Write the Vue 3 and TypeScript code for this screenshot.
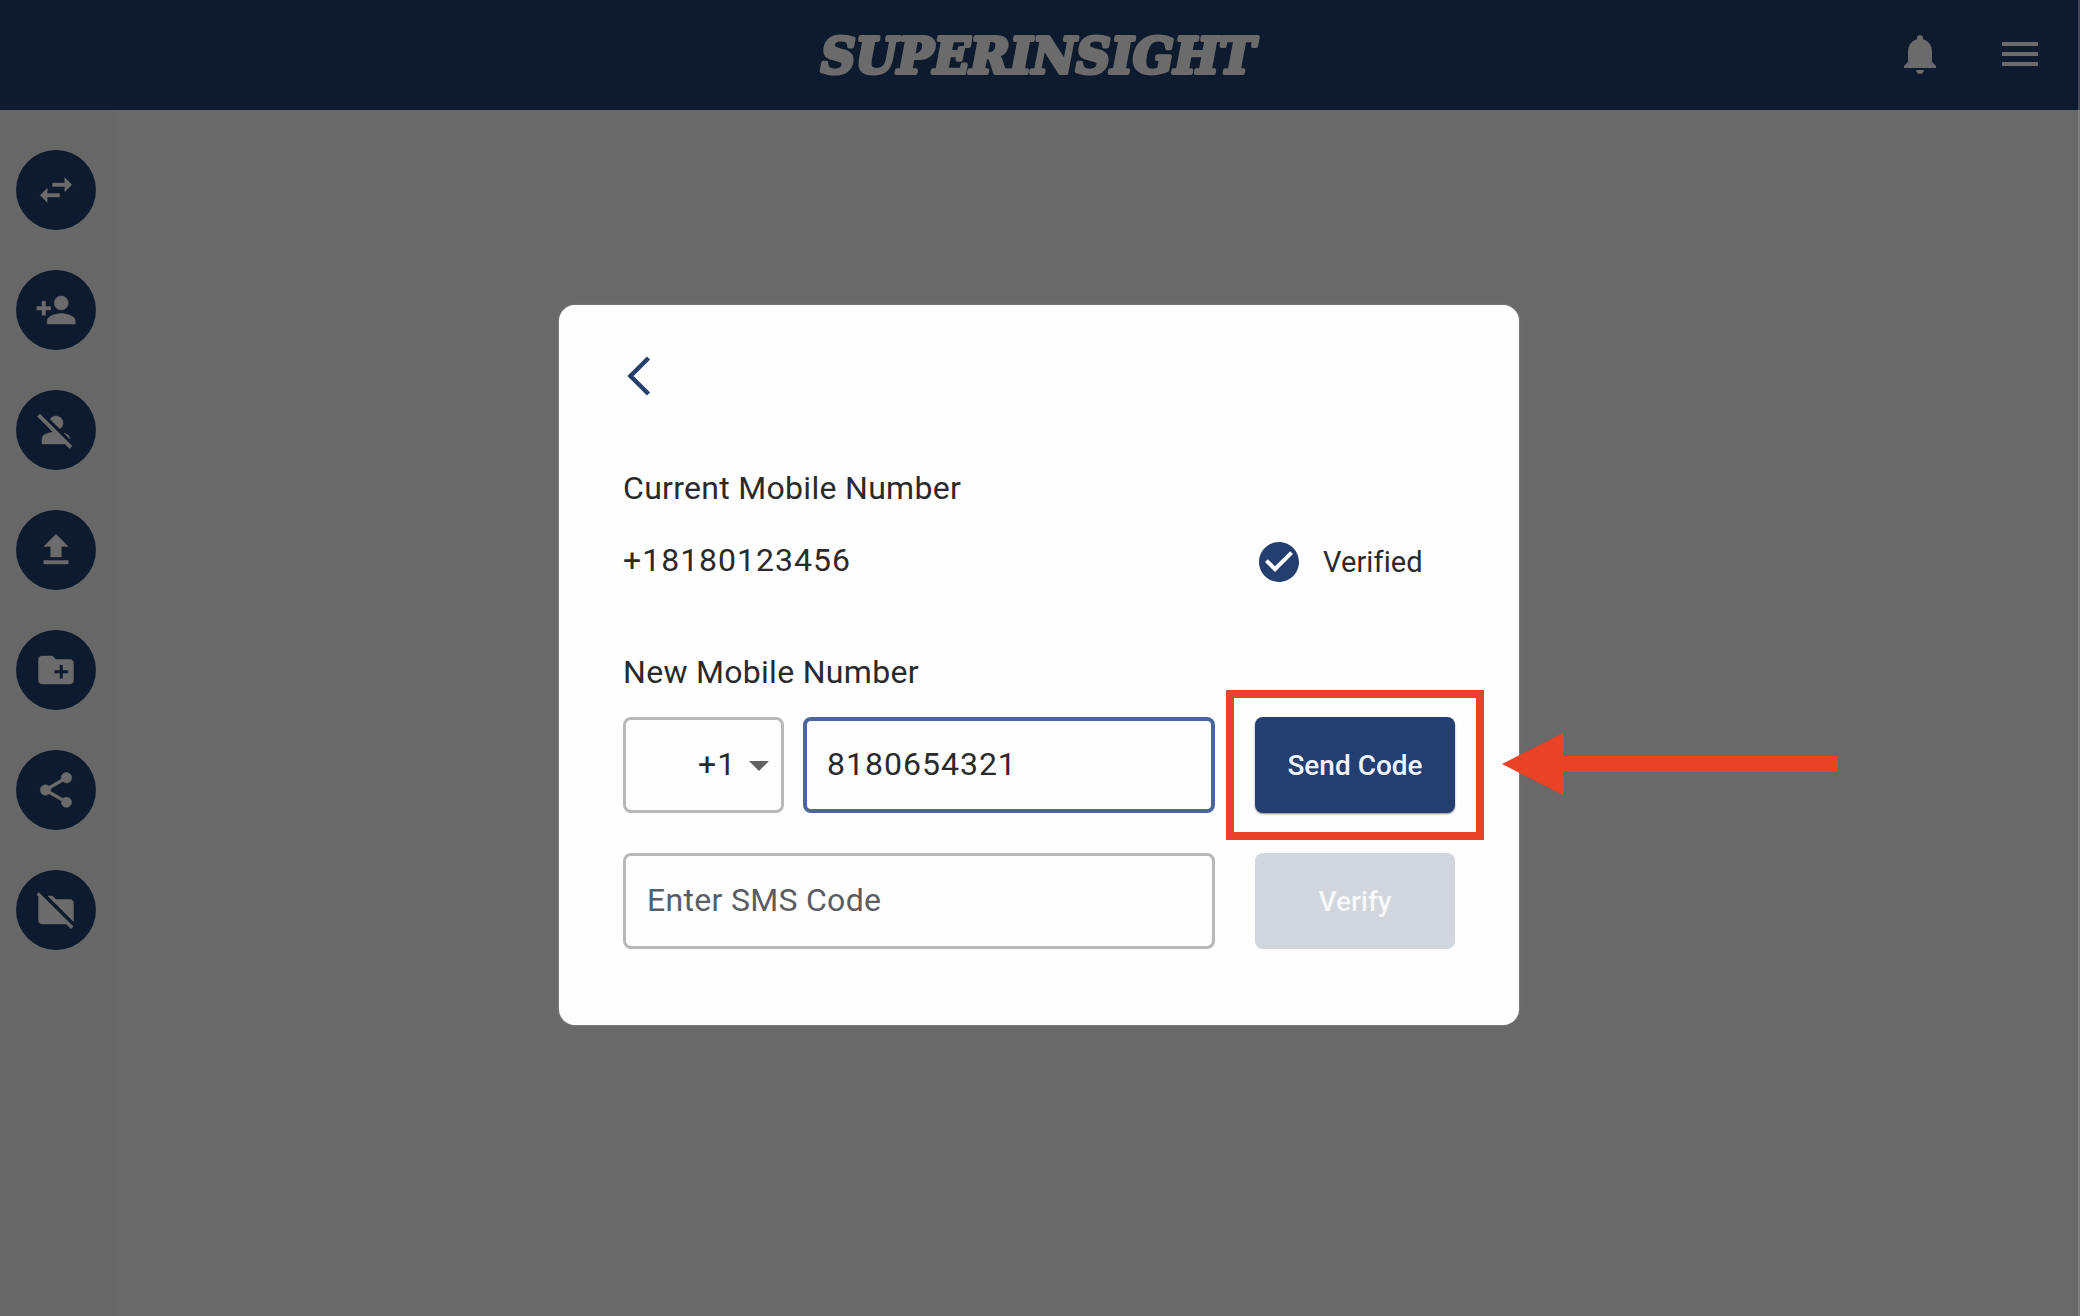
<script setup lang="ts">
interface Action {
  name: string
  path: string
}

const actions: Action[] = [
  { name: 'Switch', path: 'M6.99 11L3 15l3.99 4v-3H14v-2H6.99v-3zM21 9l-3.99-4v3H10v2h7.01v3L21 9z' },
  { name: 'Add person', path: 'M15 12c2.21 0 4-1.79 4-4s-1.79-4-4-4-4 1.79-4 4 1.79 4 4 4zm-9-2V7H4v3H1v2h3v3h2v-3h3v-2H6zm9 4c-2.67 0-8 1.34-8 4v2h16v-2c0-2.66-5.33-4-8-4z' },
  { name: 'Remove person', path: 'M8.65 5.82C9.36 4.72 10.6 4 12 4c2.21 0 4 1.79 4 4 0 1.4-.72 2.64-1.82 3.35L8.65 5.82zM20 17.17c-.02-1.1-.63-2.11-1.61-2.62-.54-.28-1.13-.54-1.77-.76L20 17.17zm1.19 4.02L2.81 2.81 1.39 4.22l8.89 8.89c-1.81.23-3.39.79-4.67 1.45-1 .51-1.61 1.54-1.61 2.66V20h13.17l2.61 2.61 1.41-1.42z' },
  { name: 'Upload', path: 'M5 20h14v-2H5v2zM5 10h4v6h6v-6h4l-7-7-7 7z' },
  { name: 'New folder', path: 'M20 6h-8l-2-2H4c-1.11 0-1.99.89-1.99 2L2 18c0 1.11.89 2 2 2h16c1.11 0 2-.89 2-2V8c0-1.11-.89-2-2-2zm-1 8h-3v3h-2v-3h-3v-2h3V9h2v3h3v2z' },
  { name: 'Share', path: 'M18 16.08c-.76 0-1.44.3-1.96.77L8.91 12.7c.05-.23.09-.46.09-.7s-.04-.47-.09-.7l7.05-4.11c.54.5 1.25.81 2.04.81 1.66 0 3-1.34 3-3s-1.34-3-3-3-3 1.34-3 3c0 .24.04.47.09.7L8.04 9.81C7.5 9.31 6.79 9 6 9c-1.66 0-3 1.34-3 3s1.34 3 3 3c.79 0 1.5-.31 2.04-.81l7.12 4.16c-.05.21-.08.43-.08.65 0 1.61 1.31 2.92 2.92 2.92s2.92-1.31 2.92-2.92-1.31-2.92-2.92-2.92z' },
  { name: 'Remove folder', path: 'M22 8c0-1.1-.9-2-2-2h-8l-2-2H7.4L22 18.6V8zM2.2 2L1 3.2l1.3 1.3C2.1 4.9 2 5.4 2 6v12c0 1.1.9 2 2 2h13.8l2.7 2.7 1.3-1.3L2.2 2z' },
]
</script>

<template>
  <div class="page">
    <header class="topbar">
      <svg class="logo" viewBox="0 0 464 80" role="img">
        <text x="14" y="57.5" textLength="434" lengthAdjust="spacingAndGlyphs">SUPERINSIGHT</text>
      </svg>
      <div class="tools">
        <svg viewBox="0 0 24 24"><path d="M12 22c1.1 0 2-.9 2-2h-4c0 1.1.89 2 2 2zm6-6v-5c0-3.07-1.64-5.64-4.5-6.32V4c0-.83-.67-1.5-1.5-1.5s-1.5.67-1.5 1.5v.68C7.63 5.36 6 7.92 6 11v5l-2 2v1h16v-1l-2-2z" /></svg>
        <svg viewBox="0 0 24 24"><path d="M3 18h18v-2H3v2zm0-5h18v-2H3v2zm0-7v2h18V6H3z" /></svg>
      </div>
    </header>

    <main class="workspace">
      <nav class="sidebar">
        <button v-for="action in actions" :key="action.name" class="action">
          <svg viewBox="0 0 24 24"><path :d="action.path" /></svg>
        </button>
      </nav>
      <section class="content">
        <div class="dialog">
          <svg class="back" viewBox="0 0 24 40"><path d="M21.5 2 3.5 20l18 18" /></svg>
          <h2 class="label">Current Mobile Number</h2>
          <div class="current">
            <span class="number">+18180123456</span>
            <span class="status">
              <svg viewBox="2 2 20 20"><path d="M12 2C6.48 2 2 6.48 2 12s4.48 10 10 10 10-4.48 10-10S17.52 2 12 2zm-2 15l-5-5 1.41-1.41L10 14.17l7.59-7.59L19 8l-9 9z" /></svg>
              <span>Verified</span>
            </span>
          </div>
          <h2 class="label second">New Mobile Number</h2>
          <div class="row">
            <div class="field country"><span>+1</span><i class="caret"></i></div>
            <div class="field phone">8180654321</div>
            <div class="target">
              <button class="btn">Send Code</button>
              <div class="highlight"></div>
              <svg class="arrow" viewBox="0 0 337 64"><path d="M0 32 62 .5V24h274v16H62v23.5z" /></svg>
            </div>
          </div>
          <div class="row last">
            <div class="field sms">Enter SMS Code</div>
            <button class="btn disabled">Verify</button>
          </div>
        </div>
      </section>
    </main>
  </div>
</template>

<style>
body { margin: 0; background: #696969; }
</style>

<style scoped>
* { box-sizing: border-box; }
.page {
  width: 2080px; height: 1316px; overflow: hidden;
  display: flex; flex-direction: column;
  background: #696969; font-family: Roboto, sans-serif; color: #2a2a2a;
}
.topbar {
  height: 110px; flex: none; display: grid;
  grid-template-columns: 1fr 464px 1fr; align-items: center;
  background: #0e1b2e; border-right: 2px solid #434a55;
}
.logo { grid-column: 2; width: 464px; height: 80px; }
.logo text {
  font: italic bold 49px "DejaVu Serif", serif;
  fill: #6b6b6b; stroke: #6b6b6b; stroke-width: 4px; stroke-linejoin: round;
}
.tools { grid-column: 3; display: flex; justify-content: flex-end; gap: 52px; padding: 0 34px 2px 0; }
.tools svg { width: 48px; height: 48px; fill: #6b6b6b; }
.workspace { flex: 1; display: flex; border-right: 2px solid #7e7e7e; }
.sidebar {
  width: 114px; padding: 40px 0 0 16px;
  display: flex; flex-direction: column; gap: 40px; background: #676767;
}
.action {
  width: 80px; height: 80px; flex: none; padding: 0; border: 0; border-radius: 50%;
  display: flex; align-items: center; justify-content: center; background: #0e1b2e;
}
.action svg { width: 42px; height: 42px; fill: #6b6b6b; stroke: #6b6b6b; stroke-width: .25px; }
.content { flex: 1; padding: 195px 0 0 445px; }
.dialog {
  width: 960px; height: 720px; padding: 51px 64px 0;
  display: flex; flex-direction: column;
  background: #fefefe; border-radius: 16px; box-shadow: 0 0 2px #aaa;
}
.back { width: 24px; height: 40px; margin-left: 4px; flex: none; fill: none; stroke: #243e6f; stroke-width: 4.4px; }
.label { margin: 68px 0 0; height: 48px; line-height: 48px; font-size: 32px; font-weight: 400; letter-spacing: .3px; }
.current { height: 48px; margin-top: 24px; display: flex; align-items: center; justify-content: space-between; }
.number { font-size: 32px; letter-spacing: 1px; }
.status { display: flex; align-items: center; gap: 24px; width: 196px; padding-top: 4px; font-size: 29px; letter-spacing: .1px; }
.status svg { width: 40px; height: 40px; fill: #243e6f; }
.label.second { margin-top: 64px; }
.row { display: flex; height: 96px; margin-top: 21px; }
.row.last { margin-top: 40px; }
.field {
  height: 96px; padding-bottom: 2px; border: 3px solid #b8b8b8; border-radius: 8px;
  display: flex; align-items: center; font-size: 32px; letter-spacing: 1px;
}
.country { width: 161px; padding-right: 12px; padding-left: 72px; justify-content: space-between; }
.caret { margin-top: 3px; border: 10px solid transparent; border-top-color: #616161; border-bottom: 0; }
.phone { width: 412px; margin-left: 19px; padding-left: 20px; border: 4px solid #4a669c; }
.sms { width: 592px; padding-left: 21px; color: #5b5d62; letter-spacing: .3px; }
.target { position: relative; margin-left: 40px; }
.last .btn { margin-left: 40px; }
.btn {
  width: 200px; height: 96px; padding: 0; border: 0; border-radius: 8px;
  background: #243e6f; color: #eef3fc; font: 500 28px Roboto, sans-serif;
  box-shadow: 0 1px 2px #888;
}
.disabled { background: #d1d5dc; color: #f7f8fa; box-shadow: none; }
.highlight { position: absolute; left: -29px; top: -27px; width: 258px; height: 150px; border: 8px solid #e94226; }
.arrow { position: absolute; left: 247px; top: 15px; width: 337px; height: 64px; fill: #e94226; }
</style>
